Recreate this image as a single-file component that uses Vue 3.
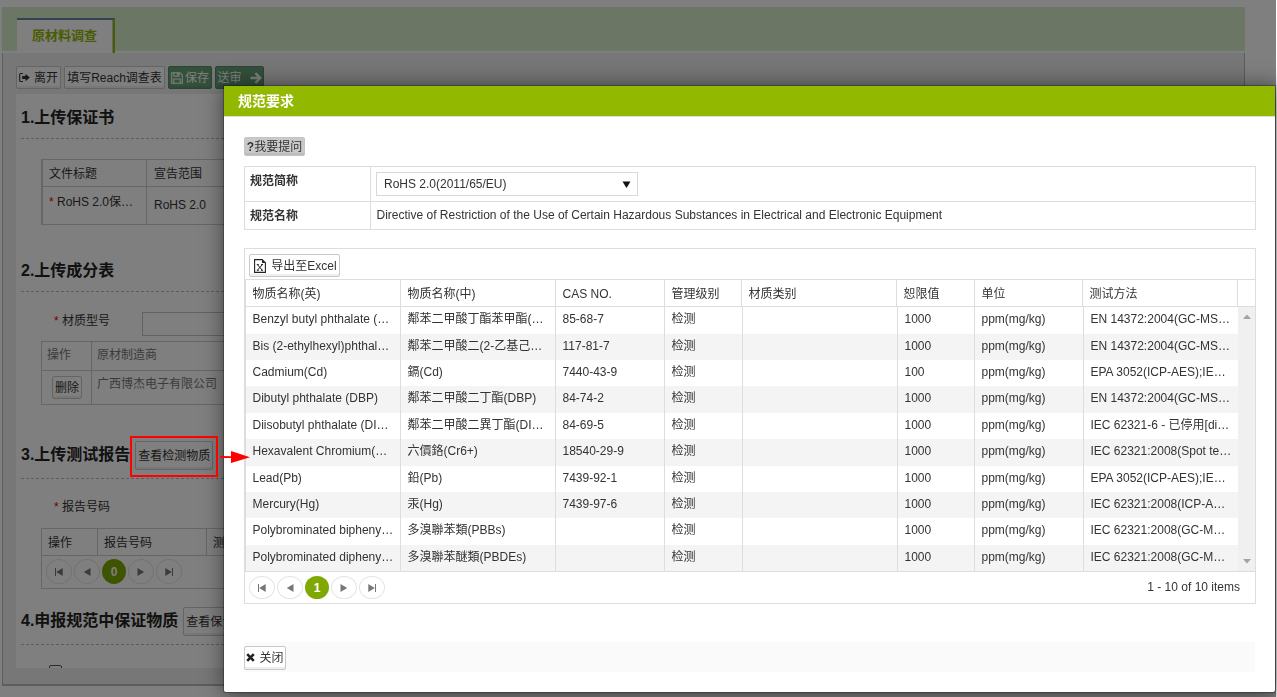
<template>
  <div class="page">
    <div class="tabs">
      <div class="tab">原材料调查</div>
    </div>
    <div class="panel">
      <div class="toolbar">
        <button class="btn leave">
          <svg width="11" height="11" viewBox="0 0 11 11"><path d="M4 1.5H1.8Q.7 1.5.7 2.6v5.8q0 1.1 1.1 1.1H4" fill="none" stroke="#333" stroke-width="1.1" /><path d="M3.2 4h3.3V1.7L10.8 5.5 6.5 9.3V7H3.2z" fill="#333" /></svg>
          <span>离开</span>
        </button>
        <button class="btn reach">填写Reach调查表</button>
        <button class="btn green save">
          <svg width="12" height="12" viewBox="0 0 12 12"><path d="M.7.7h8.3l2.3 2.3v8.3H.7z M3 .7v3.6h5V.7 M2.8 11.3V7h6.4v4.3" fill="none" stroke="#fff" stroke-width="1.1" /><path d="M5.8 1h1.6v2.6H5.8z" fill="#fff" /></svg>
          <span>保存</span>
        </button>
        <button class="btn green send">
          <span>送审</span>
          <svg width="12" height="12" viewBox="0 0 12 12"><path d="M.5 6h9.5M5.4 1.2 10.2 6l-4.8 4.8" fill="none" stroke="#fff" stroke-width="2.4" /></svg>
        </button>
      </div>
      <div class="content">
        <h2 class="first">1.上传保证书</h2>
        <div class="box files">
          <div class="line head"><span class="c1">文件标题</span><span>宣告范围</span></div>
          <div class="line body"><span class="c1 up"><i>*</i> RoHS 2.0保…</span><span>RoHS 2.0</span></div>
        </div>

        <h2 class="second">2.上传成分表</h2>
        <div class="field model"><label><i>*</i> 材质型号</label><input type="text"></div>
        <div class="box parts">
          <div class="line head"><span class="c1">操作</span><span>原材制造商</span></div>
          <div class="line body"><span class="c1"><button class="btn del">删除</button></span><span class="maker">广西博杰电子有限公司</span></div>
        </div>

        <h2 class="third">3.上传测试报告<button class="btn check">查看检测物质</button></h2>
        <div class="field report"><label><i>*</i> 报告号码</label></div>
        <div class="box reports">
          <div class="line head"><span class="c1">操作</span><span class="c2">报告号码</span><span class="c3">测试</span></div>
          <div class="pager small">
            <b v-for="p in pages" :key="p" :class="{ on: p == 'num' }">
              <template v-if="p == 'num'">0</template>
              <svg v-else width="10" height="10" viewBox="0 0 10 10"><path :d="arrows[p]" fill="#777" /></svg>
            </b>
          </div>
        </div>

        <h2 class="fourth">4.申报规范中保证物质<button class="btn check">查看保证物质</button></h2>
        <div class="tick"></div>
      </div>
    </div>
  </div>

  <div class="mask"></div>

  <div class="modal">
    <div class="title">规范要求</div>
    <div class="main">
      <button class="btn ask"><b>?</b>我要提问</button>
      <div class="info">
        <div class="row r1">
          <div class="name">规范简称</div>
          <div class="value">
            <div class="select">
              <span>RoHS 2.0(2011/65/EU)</span>
              <svg width="9" height="8" viewBox="0 0 9 8"><path d="M.5 1.4h8L4.5 8z" fill="#111" /></svg>
            </div>
          </div>
        </div>
        <div class="row r2">
          <div class="name">规范名称</div>
          <div class="value text">Directive of Restriction of the Use of Certain Hazardous Substances in Electrical and Electronic Equipment</div>
        </div>
      </div>

      <div class="grid">
        <div class="tools">
          <button class="btn excel">
            <svg width="12" height="14" viewBox="0 0 12 14"><path d="M.6.6h7.6l3.2 3.2v9.6H.6z" fill="#fff" stroke="#222" stroke-width="1.1" /><path d="M8 .7v3.2h3.3z" fill="#222" /><path d="M3.6 5.8 8 11M8.2 5.8 3.6 11M2.8 5.6h2M7 5.6h2M2.8 11.3h2M7 11.3h2" stroke="#222" stroke-width="1" /></svg>
            <span>导出至Excel</span>
          </button>
        </div>
        <div class="thead">
          <span v-for="h in heads" :key="h">{{ h }}</span>
          <span></span>
        </div>
        <div class="tbody">
          <div class="rows">
            <div class="tr" v-for="(item, index) of list" :key="index">
              <span v-for="(text, i) of item" :key="i">{{ text }}</span>
            </div>
          </div>
          <div class="scroll">
            <svg width="8" height="5" viewBox="0 0 8 5"><path d="M0 5 4 .5 8 5z" fill="#a3a3a3" /></svg>
            <svg width="8" height="5" viewBox="0 0 8 5"><path d="M0 0h8L4 4.5z" fill="#a3a3a3" /></svg>
          </div>
        </div>
        <div class="pager">
          <b v-for="p in pages" :key="p" :class="{ on: p == 'num' }">
            <template v-if="p == 'num'">1</template>
            <svg v-else width="10" height="10" viewBox="0 0 10 10"><path :d="arrows[p]" fill="#777" /></svg>
          </b>
          <span class="total">1 - 10 of 10 items</span>
        </div>
      </div>

      <div class="footer">
        <button class="btn close">
          <svg width="9" height="9" viewBox="0 0 9 9"><path d="M1.2 1.2l6.6 6.6M7.8 1.2 1.2 7.8" stroke="#222" stroke-width="2.6" /></svg>
          <span>关闭</span>
        </button>
      </div>
    </div>
  </div>

  <div class="mark"></div>
  <svg class="pointer" width="32" height="14" viewBox="0 0 32 14"><path d="M2 6 13 6.3V1L32 7.3 13 13V8H2z" fill="#f00" /></svg>
</template>

<script setup>
import { ref } from 'vue'

const pages = ['first', 'prev', 'num', 'next', 'last']
const arrows = {
  first: 'M1 1h1v8H1zM8.7 1v8L2.2 5z',
  prev: 'M8.5 1v8L1.8 5z',
  next: 'M1.5 1v8L8.2 5z',
  last: 'M8 1h1v8H8zM1.3 1v8L7.8 5z'
}
const heads = ['物质名称(英)', '物质名称(中)', 'CAS NO.', '管理级别', '材质类别', '恕限值', '单位', '测试方法']
const list = ref([
  ['Benzyl butyl phthalate (…', '鄰苯二甲酸丁酯苯甲酯(…', '85-68-7', '检测', '', '1000', 'ppm(mg/kg)', 'EN 14372:2004(GC-MS…'],
  ['Bis (2-ethylhexyl)phthal…', '鄰苯二甲酸二(2-乙基己…', '117-81-7', '检测', '', '1000', 'ppm(mg/kg)', 'EN 14372:2004(GC-MS…'],
  ['Cadmium(Cd)', '鎘(Cd)', '7440-43-9', '检测', '', '100', 'ppm(mg/kg)', 'EPA 3052(ICP-AES);IE…'],
  ['Dibutyl phthalate (DBP)', '鄰苯二甲酸二丁酯(DBP)', '84-74-2', '检测', '', '1000', 'ppm(mg/kg)', 'EN 14372:2004(GC-MS…'],
  ['Diisobutyl phthalate (DI…', '鄰苯二甲酸二異丁酯(DI…', '84-69-5', '检测', '', '1000', 'ppm(mg/kg)', 'IEC 62321-6 - 已停用[di…'],
  ['Hexavalent Chromium(…', '六價鉻(Cr6+)', '18540-29-9', '检测', '', '1000', 'ppm(mg/kg)', 'IEC 62321:2008(Spot te…'],
  ['Lead(Pb)', '鉛(Pb)', '7439-92-1', '检测', '', '1000', 'ppm(mg/kg)', 'EPA 3052(ICP-AES);IE…'],
  ['Mercury(Hg)', '汞(Hg)', '7439-97-6', '检测', '', '1000', 'ppm(mg/kg)', 'IEC 62321:2008(ICP-A…'],
  ['Polybrominated bipheny…', '多溴聯苯類(PBBs)', '', '检测', '', '1000', 'ppm(mg/kg)', 'IEC 62321:2008(GC-M…'],
  ['Polybrominated dipheny…', '多溴聯苯醚類(PBDEs)', '', '检测', '', '1000', 'ppm(mg/kg)', 'IEC 62321:2008(GC-M…']
])
</script>

<style>
html, body {
  height: 100%;
  overflow: hidden;
  background: #fff;
}
#app {
  font: 12px/16px "Liberation Sans", Arial, "Noto Sans CJK SC", sans-serif;
  color: #333;
}
#app * {
  box-sizing: border-box;
}
</style>

<style scoped>
.page {
  height: 697px;
  padding: 7px 0 0 2px;
  overflow: hidden;
}
svg {
  display: block;
  flex: none;
}
.tabs {
  width: 1243px;
  height: 46px;
  padding: 11px 0 0 15px;
  background: #d6ecc8;
  border-bottom: 2px solid #fff;
}
.tab {
  width: 98px;
  height: 35px;
  padding-left: 15px;
  line-height: 32px;
  font-size: 13px;
  font-weight: bold;
  color: #92b800;
  background: #fff;
  border-top: 2px solid #5d8ca8;
  border-right: 2px solid #92b800;
  box-shadow: inset -1px 0 #ccc;
}
.panel {
  width: 1243px;
  height: 633px;
  padding: 13px 0 0 13px;
  background: #efefef;
  border: 1px solid #bbb;
  border-top: 0;
  border-bottom: 2px solid #bbb;
}
.toolbar {
  display: flex;
  gap: 3px;
  height: 28px;
}
.btn {
  display: flex;
  align-items: center;
  justify-content: center;
  height: 23px;
  padding: 0;
  font: inherit;
  color: #333;
  white-space: nowrap;
  background: #fff;
  border: 1px solid #c8c8c8;
  border-radius: 2px;
  box-shadow: inset 0 -2px #eee;
}
.leave {
  width: 45px;
  gap: 4px;
}
.reach {
  width: 101px;
}
.green {
  color: #fff;
  background: #67a076;
  border-color: #58886a;
  box-shadow: inset 0 -2px #5f966e;
}
.save {
  width: 44px;
  gap: 2px;
}
.send {
  width: 49px;
  gap: 8px;
}
.content {
  height: 574px;
  padding-left: 5px;
  overflow: hidden;
  background: #fff;
}
h2 {
  display: flex;
  align-items: center;
  margin: 0;
  font-size: 16px;
  color: #222;
  border-bottom: 1px dashed #bbb;
}
.first {
  height: 45px;
  padding-top: 4px;
}
.second {
  height: 43px;
  margin-top: 24px;
  padding-top: 2px;
}
.third {
  height: 49px;
  margin-top: 25px;
  padding-top: 2px;
}
.fourth {
  height: 47px;
  margin-top: 9px;
}
.check {
  height: 29px;
  margin-left: 5px;
  padding: 2px 2px 0;
  font-size: 12px;
  font-weight: normal;
}
i {
  color: #e00;
  font-style: normal;
}
.box {
  margin-left: 20px;
  border: 1px solid #ccc;
}
.line {
  display: flex;
}
.line span {
  padding-left: 7px;
}
.line .c1, .line .c2 {
  flex: none;
  border-right: 1px solid #ccc;
}
.head {
  border-bottom: 1px solid #ccc;
}
.files {
  height: 66px;
  margin-top: 20px;
  border-left-width: 2px;
}
.files .head {
  height: 27px;
  line-height: 29px;
}
.files .body {
  height: 37px;
  line-height: 37px;
}
.files .c1 {
  width: 104px;
  padding-left: 6px;
}
.files .up {
  line-height: 31px;
}
.field {
  display: flex;
  height: 24px;
  line-height: 18px;
}
.field label {
  width: 89px;
  padding-left: 33px;
  margin-right: 32px;
  white-space: nowrap;
}
.field input {
  flex: 1;
  height: 24px;
  border: 1px solid #c4c4c4;
}
.model {
  margin-top: 20px;
}
.report {
  margin-top: 20px;
  height: 19px;
  line-height: 16px;
}
.parts {
  height: 64px;
  margin-top: 5px;
  color: #777;
}
.parts .head {
  height: 29px;
  line-height: 27px;
}
.parts .c1 {
  width: 50px;
  padding-left: 5px;
}
.parts .head span:last-child, .parts .maker {
  padding-left: 5px;
}
.parts .body {
  height: 33px;
}
.parts .maker {
  line-height: 27px;
}
.del {
  width: 30px;
  margin: 5px 0 0 5px;
}
.reports {
  height: 61px;
  margin-top: 10px;
}
.reports .head {
  height: 27px;
  line-height: 29px;
}
.reports .c1 {
  width: 56px;
  padding-left: 6px;
}
.reports .c2 {
  width: 109px;
  padding-left: 6px;
}
.reports .c3 {
  padding-left: 6px;
}
.tick {
  width: 13px;
  height: 13px;
  margin: 20px 0 0 28px;
  border: 1px solid #555;
  border-radius: 2px;
}
.pager {
  display: flex;
  align-items: center;
  height: 31px;
  gap: 2px;
  padding-left: 4px;
}
.pager b {
  display: flex;
  align-items: center;
  justify-content: center;
  width: 26px;
  height: 23px;
  border: 1px solid #e4e4e4;
  border-radius: 50%;
}
.pager .on {
  width: 24px;
  color: #fff;
  background: #7fa800;
  border: 0;
}
.pager.small b {
  height: 25px;
}
.mask {
  position: fixed;
  top: 0;
  left: 0;
  width: 1276px;
  height: 697px;
  background: rgba(0, 0, 0, .5);
}
.modal {
  position: absolute;
  top: 86px;
  left: 224px;
  width: 1051px;
  height: 606px;
  background: #fff;
  border-radius: 0 0 2px 2px;
  box-shadow: 0 0 1px 1px rgba(0, 0, 0, .3), 2px 2px 22px 2px rgba(0, 0, 0, .5);
}
.title {
  height: 31px;
  padding-left: 14px;
  font-size: 14px;
  font-weight: bold;
  line-height: 30px;
  color: #fff;
  background: #92b800;
  background-clip: padding-box;
  border-bottom: 1px solid #ddd;
}
.main {
  padding: 20px 20px 0;
}
.ask {
  width: 61px;
  height: 19px;
  background: #c9c9c9;
  border-color: #c4c4c4;
  box-shadow: inset 0 -2px #bdbdbd;
}
.info {
  width: 1012px;
  margin-top: 10px;
  border: 1px solid #ddd;
}
.row {
  display: flex;
}
.r1 {
  height: 35px;
  border-bottom: 1px solid #ddd;
}
.r2 {
  height: 27px;
}
.name {
  width: 126px;
  padding: 6px 0 0 5px;
  font-weight: bold;
  border-right: 1px solid #ddd;
}
.value {
  padding: 5px 0 0 5px;
}
.text {
  padding-left: 5.5px;
}
.select {
  display: flex;
  align-items: center;
  justify-content: space-between;
  width: 262px;
  height: 24px;
  padding: 0 6px 0 7px;
  border: 1px solid #d9d9d9;
}
.grid {
  width: 1012px;
  height: 356px;
  margin-top: 18px;
  border: 1px solid #ddd;
}
.tools {
  height: 30px;
  padding: 5px 0 0 4px;
}
.excel {
  width: 91px;
  gap: 5px;
  padding-left: 2px;
}
.thead {
  display: grid;
  grid-template-columns: 155px 155px 109px 77px 155px 78px 108px 155px 18px;
  height: 28px;
  line-height: 29px;
  border: 1px solid #ddd;
  border-width: 1px 0;
}
.thead span, .tr span {
  padding-left: 6.5px;
  white-space: nowrap;
  overflow: hidden;
  border-left: 1px solid #ddd;
}
.tbody {
  display: flex;
  height: 265px;
  border-bottom: 1px solid #ddd;
}
.rows {
  width: 993px;
  padding-top: .2px;
}
.tr {
  display: grid;
  grid-template-columns: 155px 155px 109px 78px 155px 77px 109px 155px;
  height: 26.4px;
  line-height: 25px;
}
.tr:nth-child(even) {
  background: #f4f4f4;
}
.scroll {
  display: flex;
  flex-direction: column;
  align-items: center;
  justify-content: space-between;
  width: 17px;
  padding: 7px 0;
  background: #f0f0f0;
}
.total {
  margin-left: auto;
  padding: 0 15px 1px 0;
}
.footer {
  width: 1011px;
  height: 30px;
  margin-top: 38px;
  padding-top: 4px;
  background: #fafafa;
}
.close {
  width: 42px;
  height: 24px;
  gap: 4px;
  padding-bottom: 1px;
}
.mark {
  position: absolute;
  top: 436px;
  left: 130px;
  width: 88px;
  height: 41px;
  border: 2px solid #f00;
}
.pointer {
  position: absolute;
  top: 450px;
  left: 218px;
}
</style>
